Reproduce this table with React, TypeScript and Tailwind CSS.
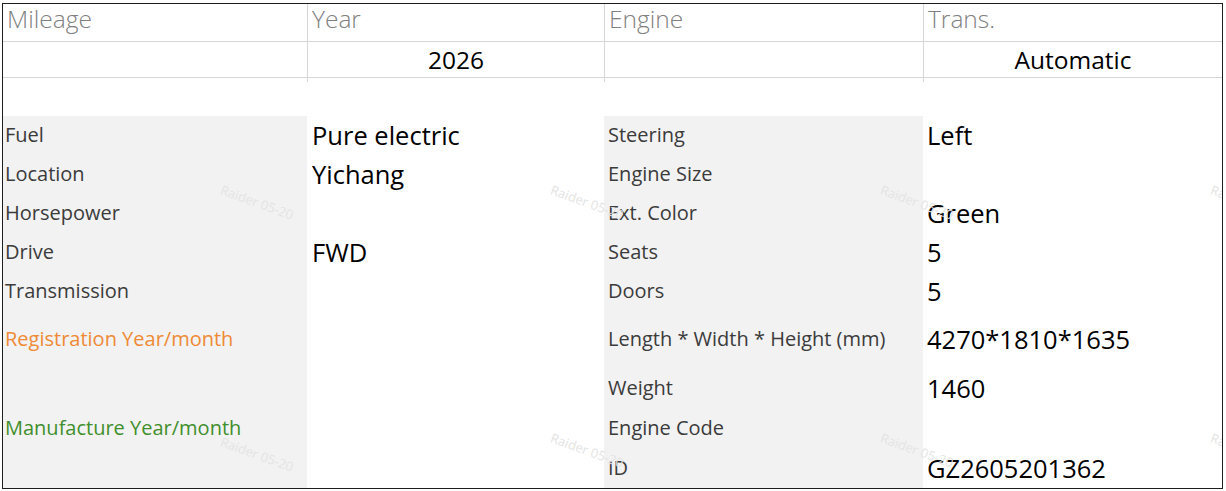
import React from "react";

// spec sheet: header strip + two label/value column pairs
const font = { fontFamily: '"Open Sans", "Noto Sans", sans-serif' };

type Row = { h: string; l1?: React.ReactNode; v1?: string; l2?: string; v2?: string };

const rows: Row[] = [
  { h: "h-[39px]", l1: "Fuel", v1: "Pure electric", l2: "Steering", v2: "Left" },
  { h: "h-[39px]", l1: "Location", v1: "Yichang", l2: "Engine Size" },
  { h: "h-[39px]", l1: "Horsepower", l2: "Ext. Color", v2: "Green" },
  { h: "h-[39px]", l1: "Drive", v1: "FWD", l2: "Seats", v2: "5" },
  { h: "h-[39px]", l1: "Transmission", l2: "Doors", v2: "5" },
  {
    h: "h-[57px]",
    l1: <span className="text-[#ee8a35]">Registration Year/month</span>,
    l2: "Length * Width * Height (mm)",
    v2: "4270*1810*1635",
  },
  { h: "h-[41px]", l2: "Weight", v2: "1460" },
  {
    h: "h-[39px]",
    l1: <span className="text-[#3f8f2c]">Manufacture Year/month</span>,
    l2: "Engine Code",
  },
  { h: "h-[40px]", l2: "ID", v2: "GZ2605201362" },
];

const marks = [
  "left-[218px] top-[176px]",
  "left-[548px] top-[176px]",
  "left-[878px] top-[176px]",
  "left-[1208px] top-[176px]",
  "left-[218px] top-[428px]",
  "left-[548px] top-[424px]",
  "left-[878px] top-[424px]",
  "left-[1208px] top-[424px]",
];

export default function App() {
  return (
    <div className="w-[1226px] h-[491px] bg-white pt-[3px] pl-[2px] overflow-hidden" style={font}>
      <div className="relative w-[1221px] h-[486px] border border-[#1e1e1e] overflow-hidden">
        {/* header */}
        <div className="grid grid-cols-[304px_297px_319px_1fr] border-b border-[#d6d6d6] h-[38px] font-light text-[24.5px] text-[#808080]">
          <div className="pl-[4px] leading-[30px]">Mileage</div>
          <div className="pl-[4px] leading-[30px] border-l border-[#d6d6d6]">Year</div>
          <div className="pl-[4px] leading-[30px] border-l border-[#d6d6d6]">Engine</div>
          <div className="pl-[4px] leading-[30px] border-l border-[#d6d6d6]">Trans.</div>
        </div>
        <div className="grid grid-cols-[304px_297px_319px_1fr] border-b border-[#d6d6d6] h-[36px] text-[24.5px] text-black">
          <div />
          <div className="border-l border-[#d6d6d6] flex items-center justify-center pb-[3px]">2026</div>
          <div className="border-l border-[#d6d6d6]" />
          <div className="border-l border-[#d6d6d6] flex items-center justify-center pb-[3px]">Automatic</div>
        </div>
        <div className="h-[38px]" />

        {/* body */}
        <div className="grid grid-cols-[304px_297px_319px_1fr]">
          {rows.map((r, i) => (
            <React.Fragment key={i}>
              <div className={`${r.h} bg-[#f2f2f2] flex items-center pl-[2px] pb-[1px] text-[20px] text-[#3b3b3b]`}>{r.l1}</div>
              <div className={`${r.h} flex items-center pl-[5px] text-[25.5px] text-black`}>{r.v1}</div>
              <div className={`${r.h} bg-[#f2f2f2] flex items-center pl-[4px] pb-[1px] text-[20px] text-[#3b3b3b]`}>{r.l2}</div>
              <div className={`${r.h} flex items-center pl-[4px] text-[25.5px] text-black`}>{r.v2}</div>
            </React.Fragment>
          ))}
        </div>

        {/* watermarks */}
        {marks.map((m) => (
          <span
            key={m}
            className={`absolute ${m} rotate-[20deg] origin-left text-[13px] text-[#e4e4e4] whitespace-nowrap pointer-events-none`}
          >
            Raider 05-20
          </span>
        ))}
      </div>
    </div>
  );
}
